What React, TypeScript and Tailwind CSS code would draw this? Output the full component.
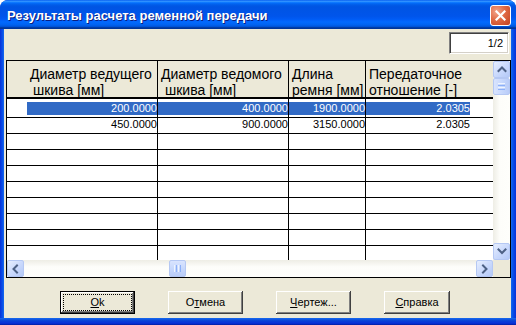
import React from "react";

function Chevron({ dir }: { dir: "up" | "down" | "left" | "right" }) {
  const d =
    dir === "up"
      ? "M1.5 6 L5 2.5 L8.5 6"
      : dir === "down"
      ? "M1.5 2.5 L5 6 L8.5 2.5"
      : dir === "left"
      ? "M6 1.5 L2.5 5 L6 8.5"
      : "M3 1.5 L6.5 5 L3 8.5";
  return (
    <svg width="10" height="10" viewBox="0 0 10 10">
      <path d={d} fill="none" stroke="#4D6185" strokeWidth="2" strokeLinecap="square" />
    </svg>
  );
}

function SBtn({ children }: { children?: React.ReactNode }) {
  return (
    <div className="w-[17px] h-[17px] shrink-0 rounded-[2px] border border-[#B5C8F3] bg-[linear-gradient(135deg,#E6EEFE,#C8D8FC_55%,#B4C9F7)] flex items-center justify-center">
      {children}
    </div>
  );
}

function VThumb() {
  return (
    <div className="w-[17px] h-[17px] shrink-0 rounded-[2px] border border-[#B5C8F3] bg-[linear-gradient(90deg,#D9E4FE,#C6D7FC_55%,#B9CCF8)] flex flex-col items-center justify-center gap-[1px]">
      <div className="w-[7px] h-[1px] bg-[#EEF4FE]" />
      <div className="w-[7px] h-[1px] bg-[#8CB0F8]" />
      <div className="w-[7px] h-[1px] bg-[#EEF4FE]" />
      <div className="w-[7px] h-[1px] bg-[#8CB0F8]" />
    </div>
  );
}

function HThumb() {
  return (
    <div className="w-[17px] h-[17px] shrink-0 rounded-[2px] border border-[#B5C8F3] bg-[linear-gradient(180deg,#D9E4FE,#C6D7FC_55%,#B9CCF8)] flex flex-row items-center justify-center gap-[1px]">
      <div className="h-[7px] w-[1px] bg-[#EEF4FE]" />
      <div className="h-[7px] w-[1px] bg-[#8CB0F8]" />
      <div className="h-[7px] w-[1px] bg-[#EEF4FE]" />
      <div className="h-[7px] w-[1px] bg-[#8CB0F8]" />
    </div>
  );
}

function Btn({
  w,
  def,
  children,
}: {
  w: string;
  def?: boolean;
  children: React.ReactNode;
}) {
  return (
    <div
      className={
        w +
        " h-[23px] shrink-0 flex bg-[#ECE9D8] " +
        (def
          ? "border border-black shadow-[inset_-1px_-1px_0_#404040,inset_1px_1px_0_#ffffff,inset_-2px_-2px_0_#808080]"
          : "shadow-[inset_-1px_-1px_0_#404040,inset_1px_1px_0_#ffffff,inset_-2px_-2px_0_#808080]")
      }
    >
      <div
        className={
          "flex-1 flex items-center justify-center text-[11px] text-black " +
          (def ? "m-[2px] border border-dotted border-black" : "")
        }
      >
        {children}
      </div>
    </div>
  );
}

const widths = ["w-[151px]", "w-[131px]", "w-[77px]", "w-[127px]"];
const borders = ["border-r border-black", "border-r border-black", "border-r border-black", ""];

export default function App() {
  const empty = [0, 1, 2, 3, 4, 5, 6];
  return (
    <div className="w-[516px] h-[325px] bg-white font-['Liberation_Sans',Arial,sans-serif] overflow-hidden">
      <div className="w-full h-full rounded-t-[8px] overflow-hidden flex flex-col bg-[#0842D6]">
        {/* Title bar */}
        <div className="h-[29px] shrink-0 flex items-start bg-[linear-gradient(to_bottom,#0058EE_0%,#3593FF_4%,#288EFF_6%,#127DFF_8%,#036FFC_10%,#0262EE_14%,#0057E5_20%,#0054E3_24%,#0055EB_56%,#005BF5_66%,#026AFE_76%,#0062EF_86%,#0052D6_92%,#0040AB_94%,#003092_100%)]">
          <div className="pl-[7px] pt-[8px] text-[13px] leading-[15px] font-bold text-white [text-shadow:1px_1px_0_#0A1E80] whitespace-nowrap">
            Результаты расчета ременной передачи
          </div>
          <div className="ml-auto mr-[5px] mt-[5px] w-[21px] h-[21px] rounded-[3px] border border-white bg-[radial-gradient(circle_at_30%_30%,#F2A48B,#E06A45_45%,#C4401E)] flex items-center justify-center">
            <svg width="11" height="11" viewBox="0 0 11 11">
              <path d="M1.5 1.5 L9.5 9.5 M9.5 1.5 L1.5 9.5" stroke="#ffffff" strokeWidth="2.2" strokeLinecap="square" />
            </svg>
          </div>
        </div>

        {/* Middle */}
        <div className="h-[289px] shrink-0 flex">
          <div className="w-[4px] bg-[linear-gradient(to_right,#0831D9,#0A55EA_70%,#166AEE)]" />
          <div className="w-[507px] bg-[#ECE9D8] flex flex-col">
            {/* page box */}
            <div className="flex justify-end pr-[2px] pt-[3px]">
              <div className="w-[60px] h-[22px] bg-white border border-t-[#808080] border-l-[#808080] border-r-white border-b-white shadow-[inset_1px_1px_0_#404040,inset_-1px_-1px_0_#D4D0C8] flex items-center justify-end pr-[5px] text-[11px] text-black">
                1/2
              </div>
            </div>

            {/* grid */}
            <div className="mt-[6px] ml-[2px] w-[505px] h-[218px] border border-black flex flex-col bg-white">
              <div className="h-[199px] flex">
                <div className="w-[486px] flex flex-col overflow-hidden">
                  {/* header */}
                  <div className="h-[38px] shrink-0 flex bg-[#ECE9D8] border-b-2 border-black text-[14px] leading-[16px] text-black">
                    <div className={widths[0] + " " + borders[0] + " pt-[5px] whitespace-nowrap"}>
                      <div className="pl-[23px]">Диаметр ведущего</div>
                      <div className="pl-[26px]">шкива [мм]</div>
                    </div>
                    <div className={widths[1] + " " + borders[1] + " pt-[5px] whitespace-nowrap"}>
                      <div className="pl-[3px]">Диаметр ведомого</div>
                      <div className="pl-[7px]">шкива [мм]</div>
                    </div>
                    <div className={widths[2] + " " + borders[2] + " pt-[5px] whitespace-nowrap"}>
                      <div className="pl-[3px]">Длина</div>
                      <div className="pl-[3px]">ремня [мм]</div>
                    </div>
                    <div className={widths[3] + " pt-[5px] whitespace-nowrap"}>
                      <div className="pl-[3px]">Передаточное</div>
                      <div className="pl-[3px]">отношение [-]</div>
                    </div>
                  </div>

                  {/* row 1 selected */}
                  <div className="h-[19px] shrink-0 flex border-b border-black text-[11px] leading-[13px]">
                    <div className={widths[0] + " " + borders[0] + " pt-[3px]"}>
                      <div className="ml-[20px] h-[13px] bg-[#316AC5] text-white text-right">200.0000</div>
                    </div>
                    <div className={widths[1] + " " + borders[1] + " pt-[3px]"}>
                      <div className="h-[13px] bg-[#316AC5] text-white text-right">400.0000</div>
                    </div>
                    <div className={widths[2] + " " + borders[2] + " pt-[3px]"}>
                      <div className="h-[13px] bg-[#316AC5] text-white text-right">1900.0000</div>
                    </div>
                    <div className={widths[3] + " pt-[3px]"}>
                      <div className="w-[104px] h-[13px] bg-[#316AC5] text-white text-right">2.0305</div>
                    </div>
                  </div>

                  {/* row 2 */}
                  <div className="h-[16px] shrink-0 flex border-b border-black text-[11px] leading-[12px] text-black">
                    <div className={widths[0] + " " + borders[0] + " text-right"}>450.0000</div>
                    <div className={widths[1] + " " + borders[1] + " text-right"}>900.0000</div>
                    <div className={widths[2] + " " + borders[2] + " text-right"}>3150.0000</div>
                    <div className={widths[3] + " text-right pr-[23px]"}>2.0305</div>
                  </div>

                  {empty.map((i) => (
                    <div key={i} className="h-[16px] shrink-0 flex border-b border-black">
                      <div className={widths[0] + " " + borders[0]} />
                      <div className={widths[1] + " " + borders[1]} />
                      <div className={widths[2] + " " + borders[2]} />
                      <div className={widths[3]} />
                    </div>
                  ))}

                  <div className="flex-1 flex">
                    <div className={widths[0] + " " + borders[0]} />
                    <div className={widths[1] + " " + borders[1]} />
                    <div className={widths[2] + " " + borders[2]} />
                    <div className={widths[3]} />
                  </div>
                </div>

                {/* vertical scrollbar */}
                <div className="w-[17px] flex flex-col bg-[linear-gradient(to_right,#EEEDE5,#FDFDFA_40%,#FEFEFB)]">
                  <SBtn>
                    <Chevron dir="up" />
                  </SBtn>
                  <VThumb />
                  <div className="flex-1" />
                  <SBtn>
                    <Chevron dir="down" />
                  </SBtn>
                </div>
              </div>

              {/* horizontal scrollbar */}
              <div className="h-[17px] flex">
                <div className="w-[486px] flex bg-[linear-gradient(to_bottom,#EEEDE5,#FDFDFA_40%,#FEFEFB)]">
                  <SBtn>
                    <Chevron dir="left" />
                  </SBtn>
                  <div className="flex-1 flex">
                    <div className="ml-[145px]">
                      <HThumb />
                    </div>
                  </div>
                  <SBtn>
                    <Chevron dir="right" />
                  </SBtn>
                </div>
                <div className="w-[17px] bg-[#ECE9D8]" />
              </div>
            </div>

            {/* buttons */}
            <div className="mt-[13px] flex pl-[56px]">
              <Btn w="w-[75px]" def>
                <span>
                  <span className="underline">O</span>k
                </span>
              </Btn>
              <div className="w-[33px] shrink-0" />
              <Btn w="w-[75px]">
                <span>
                  О<span className="underline">т</span>мена
                </span>
              </Btn>
              <div className="w-[33px] shrink-0" />
              <Btn w="w-[75px]">
                <span>
                  <span className="underline">Ч</span>ертеж...
                </span>
              </Btn>
              <div className="w-[33px] shrink-0" />
              <Btn w="w-[66px]">
                <span>
                  <span className="underline">С</span>правка
                </span>
              </Btn>
            </div>
          </div>
          <div className="w-[5px] bg-[linear-gradient(to_left,#0831D9,#0A55EA_70%,#166AEE)]" />
        </div>

        <div className="h-[7px] shrink-0 bg-[linear-gradient(to_bottom,#166AEE,#0842D6_40%,#0831D9_75%,#001EA0)]" />
      </div>
    </div>
  );
}
